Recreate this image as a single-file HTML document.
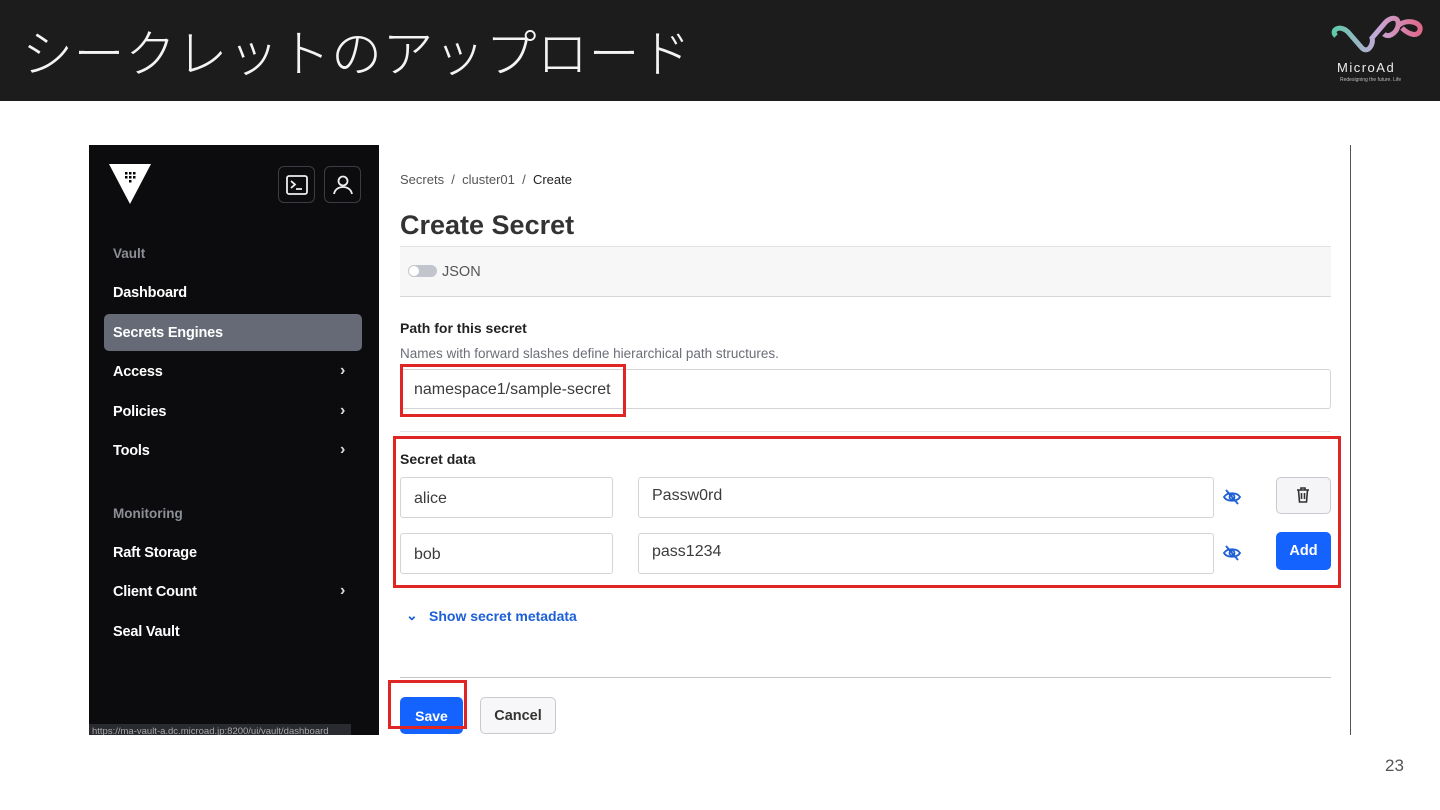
<!DOCTYPE html>
<html><head><meta charset="utf-8"><style>
*{margin:0;padding:0;box-sizing:border-box}
body{width:1440px;height:810px;background:#fff;position:relative;overflow:hidden;font-family:"Liberation Sans","Noto Sans CJK JP",sans-serif}
.a{position:absolute}
.hdr{left:0;top:0;width:1440px;height:101px;background:#1c1c1c}
.title{left:22px;top:15px;color:#f4f4f4;font-size:51px;font-weight:300;letter-spacing:0.5px;font-family:"Noto Sans CJK JP",sans-serif;line-height:70px}
.side{left:89px;top:145px;width:290px;height:590px;background:#0c0c0e}
.nav{left:113px;color:#fff;font-size:14.5px;font-weight:bold;letter-spacing:-0.2px}
.grp{left:113px;color:#8c8f96;font-size:13.5px;font-weight:bold}
.chev{left:340px;color:#ddd;font-size:16px;font-weight:bold}
.ib{width:37px;height:37px;border:1px solid #3b3d45;border-radius:6px;background:#0c0c0e}
.t{color:#333;font-size:13px}
.inp{border:1px solid #d4d4d8;border-radius:3px;background:#fff;font-size:16px;color:#3b3b3b;padding-left:13px}
.red{border:3px solid #e02525}
</style></head><body>
<div class="a hdr"></div>
<div class="a title">シークレットのアップロード</div>
<svg class="a" style="left:1328px;top:14px" width="98" height="46" viewBox="0 0 98 46">
<defs><linearGradient id="g" x1="0" x2="1"><stop offset="0" stop-color="#5fc9a8"/><stop offset=".5" stop-color="#c6a8d8"/><stop offset="1" stop-color="#e06a8a"/></linearGradient></defs>
<path d="M8 22 C2 16 12 10 20 18 L34 34 C40 40 46 30 44 24 L56 10 C62 2 72 2 70 12 C68 20 60 24 56 20 M70 12 C78 4 94 8 92 16 C90 24 80 20 74 14" fill="none" stroke="url(#g)" stroke-width="5"/>
</svg>
<div class="a" style="left:1337px;top:60px;color:#eee;font-size:13px;letter-spacing:1.5px">MicroAd</div>
<div class="a" style="left:1340px;top:77px;color:#bbb;font-size:5px">Redesigning the future. Life</div>

<div class="a side"></div>
<svg class="a" style="left:108px;top:163px" width="44" height="42" viewBox="0 0 44 42"><path d="M1 1H43L22 41Z" fill="#fff"/><g fill="#000"><rect x="17" y="9" width="2.5" height="2.5"/><rect x="21" y="9" width="2.5" height="2.5"/><rect x="25" y="9" width="2.5" height="2.5"/><rect x="17" y="13" width="2.5" height="2.5"/><rect x="21" y="13" width="2.5" height="2.5"/><rect x="25" y="13" width="2.5" height="2.5"/><rect x="21" y="17" width="2.5" height="2.5"/></g></svg>
<div class="a ib" style="left:278px;top:166px"><svg width="37" height="37" viewBox="0 0 37 37"><rect x="8" y="9" width="20" height="18" rx="2" fill="none" stroke="#eee" stroke-width="1.8"/><path d="M12 14l4 3.5-4 3.5M17 22h6" fill="none" stroke="#eee" stroke-width="1.8"/></svg></div>
<div class="a ib" style="left:324px;top:166px"><svg width="37" height="37" viewBox="0 0 37 37"><circle cx="18" cy="14" r="4.5" fill="none" stroke="#eee" stroke-width="1.8"/><path d="M9 27c1-5 5-7 9-7s8 2 9 7" fill="none" stroke="#eee" stroke-width="1.8"/></svg></div>
<div class="a grp" style="top:246px">Vault</div>
<div class="a nav" style="top:285px">Dashboard</div>
<div class="a" style="left:104px;top:314px;width:258px;height:37px;background:#656a76;border-radius:5px"></div>
<div class="a nav" style="top:325px">Secrets Engines</div>
<div class="a nav" style="top:364px">Access</div><div class="a chev" style="top:362px">›</div>
<div class="a nav" style="top:404px">Policies</div><div class="a chev" style="top:402px">›</div>
<div class="a nav" style="top:443px">Tools</div><div class="a chev" style="top:441px">›</div>
<div class="a grp" style="top:506px">Monitoring</div>
<div class="a nav" style="top:545px">Raft Storage</div>
<div class="a nav" style="top:584px">Client Count</div><div class="a chev" style="top:582px">›</div>
<div class="a nav" style="top:624px">Seal Vault</div>
<div class="a" style="left:89px;top:724px;width:262px;height:11px;background:#2a2b30;color:#aaa;font-size:9.5px;line-height:15px;overflow:hidden;padding-left:3px">https://ma-vault-a.dc.microad.jp:8200/ui/vault/dashboard</div>

<div class="a" style="left:1350px;top:145px;width:1px;height:590px;background:#555"></div>
<div class="a t" style="left:400px;top:172px;color:#555">Secrets &nbsp;/&nbsp; cluster01 &nbsp;/&nbsp; <span style="color:#222">Create</span></div>
<div class="a" style="left:400px;top:210px;font-size:27px;font-weight:bold;color:#333">Create Secret</div>
<div class="a" style="left:400px;top:246px;width:931px;height:51px;background:#f7f7f8;border-top:1px solid #e2e2e6;border-bottom:1px solid #d8d8dc"></div>
<div class="a" style="left:408px;top:265px;width:29px;height:12px;border-radius:6px;background:#c2c5cb"></div>
<div class="a" style="left:409px;top:266px;width:10px;height:10px;border-radius:5px;background:#fff"></div>
<div class="a" style="left:442px;top:264px;font-size:14.5px;color:#555">JSON</div>
<div class="a" style="left:400px;top:320px;font-size:14px;font-weight:bold;color:#222">Path for this secret</div>
<div class="a" style="left:400px;top:346px;font-size:13.5px;color:#6b6e76">Names with forward slashes define hierarchical path structures.</div>
<div class="a inp" style="left:400px;top:369px;width:931px;height:40px;line-height:40px">namespace1/sample-secret</div>
<div class="a red" style="left:400px;top:364px;width:226px;height:53px"></div>
<div class="a" style="left:400px;top:431px;width:931px;height:1px;background:#e6e6ea"></div>
<div class="a red" style="left:393px;top:436px;width:948px;height:152px"></div>
<div class="a" style="left:400px;top:451px;font-size:14px;font-weight:bold;color:#222">Secret data</div>
<div class="a inp" style="left:400px;top:477px;width:213px;height:41px;line-height:41px">alice</div>
<div class="a inp" style="left:400px;top:533px;width:213px;height:41px;line-height:41px">bob</div>
<div class="a inp" style="left:638px;top:477px;width:576px;height:41px;line-height:36px">Passw0rd</div>
<div class="a inp" style="left:638px;top:533px;width:576px;height:41px;line-height:36px">pass1234</div>
<svg class="a" style="left:1222px;top:487px" width="20" height="20" viewBox="0 0 20 20"><path d="M2 10c3-5 13-5 16 0c-3 5-13 5-16 0z" fill="none" stroke="#1c5fd6" stroke-width="1.8"/><circle cx="10" cy="10" r="2.5" fill="none" stroke="#1c5fd6" stroke-width="1.8"/><path d="M4 3l12 14" stroke="#1c5fd6" stroke-width="1.8"/></svg>
<svg class="a" style="left:1222px;top:543px" width="20" height="20" viewBox="0 0 20 20"><path d="M2 10c3-5 13-5 16 0c-3 5-13 5-16 0z" fill="none" stroke="#1c5fd6" stroke-width="1.8"/><circle cx="10" cy="10" r="2.5" fill="none" stroke="#1c5fd6" stroke-width="1.8"/><path d="M4 3l12 14" stroke="#1c5fd6" stroke-width="1.8"/></svg>
<div class="a" style="left:1276px;top:477px;width:55px;height:37px;border:1px solid #c9c9cf;border-radius:5px;background:#f5f5f7"></div>
<svg class="a" style="left:1294px;top:486px" width="18" height="18" viewBox="0 0 18 18"><path d="M3 4h12M7 4V2h4v2M4.5 4l1 12h7l1-12M7.5 7v6M10.5 7v6" fill="none" stroke="#333" stroke-width="1.6"/></svg>
<div class="a" style="left:1276px;top:532px;width:55px;height:38px;border-radius:5px;background:#1563ff;color:#fff;font-size:14.5px;font-weight:bold;text-align:center;line-height:38px">Add</div>
<div class="a" style="left:406px;top:607px;color:#1c5fd6;font-size:14px;font-weight:bold">⌄</div>
<div class="a" style="left:429px;top:608px;color:#1c5fd6;font-size:14px;font-weight:bold">Show secret metadata</div>
<div class="a" style="left:400px;top:677px;width:931px;height:1px;background:#c8c8cc"></div>
<div class="a" style="left:400px;top:697px;width:63px;height:37px;border-radius:5px;background:#1563ff;color:#fff;font-size:14px;font-weight:bold;text-align:center;line-height:38px">Save</div>
<div class="a red" style="left:388px;top:680px;width:79px;height:49px"></div>
<div class="a" style="left:480px;top:697px;width:76px;height:37px;border:1px solid #c9c9cf;border-radius:5px;background:#f7f7f9;color:#333;font-size:14.5px;font-weight:bold;text-align:center;line-height:37px">Cancel</div>
<div class="a" style="left:1385px;top:756px;font-size:17px;color:#555">23</div>
</body></html>
